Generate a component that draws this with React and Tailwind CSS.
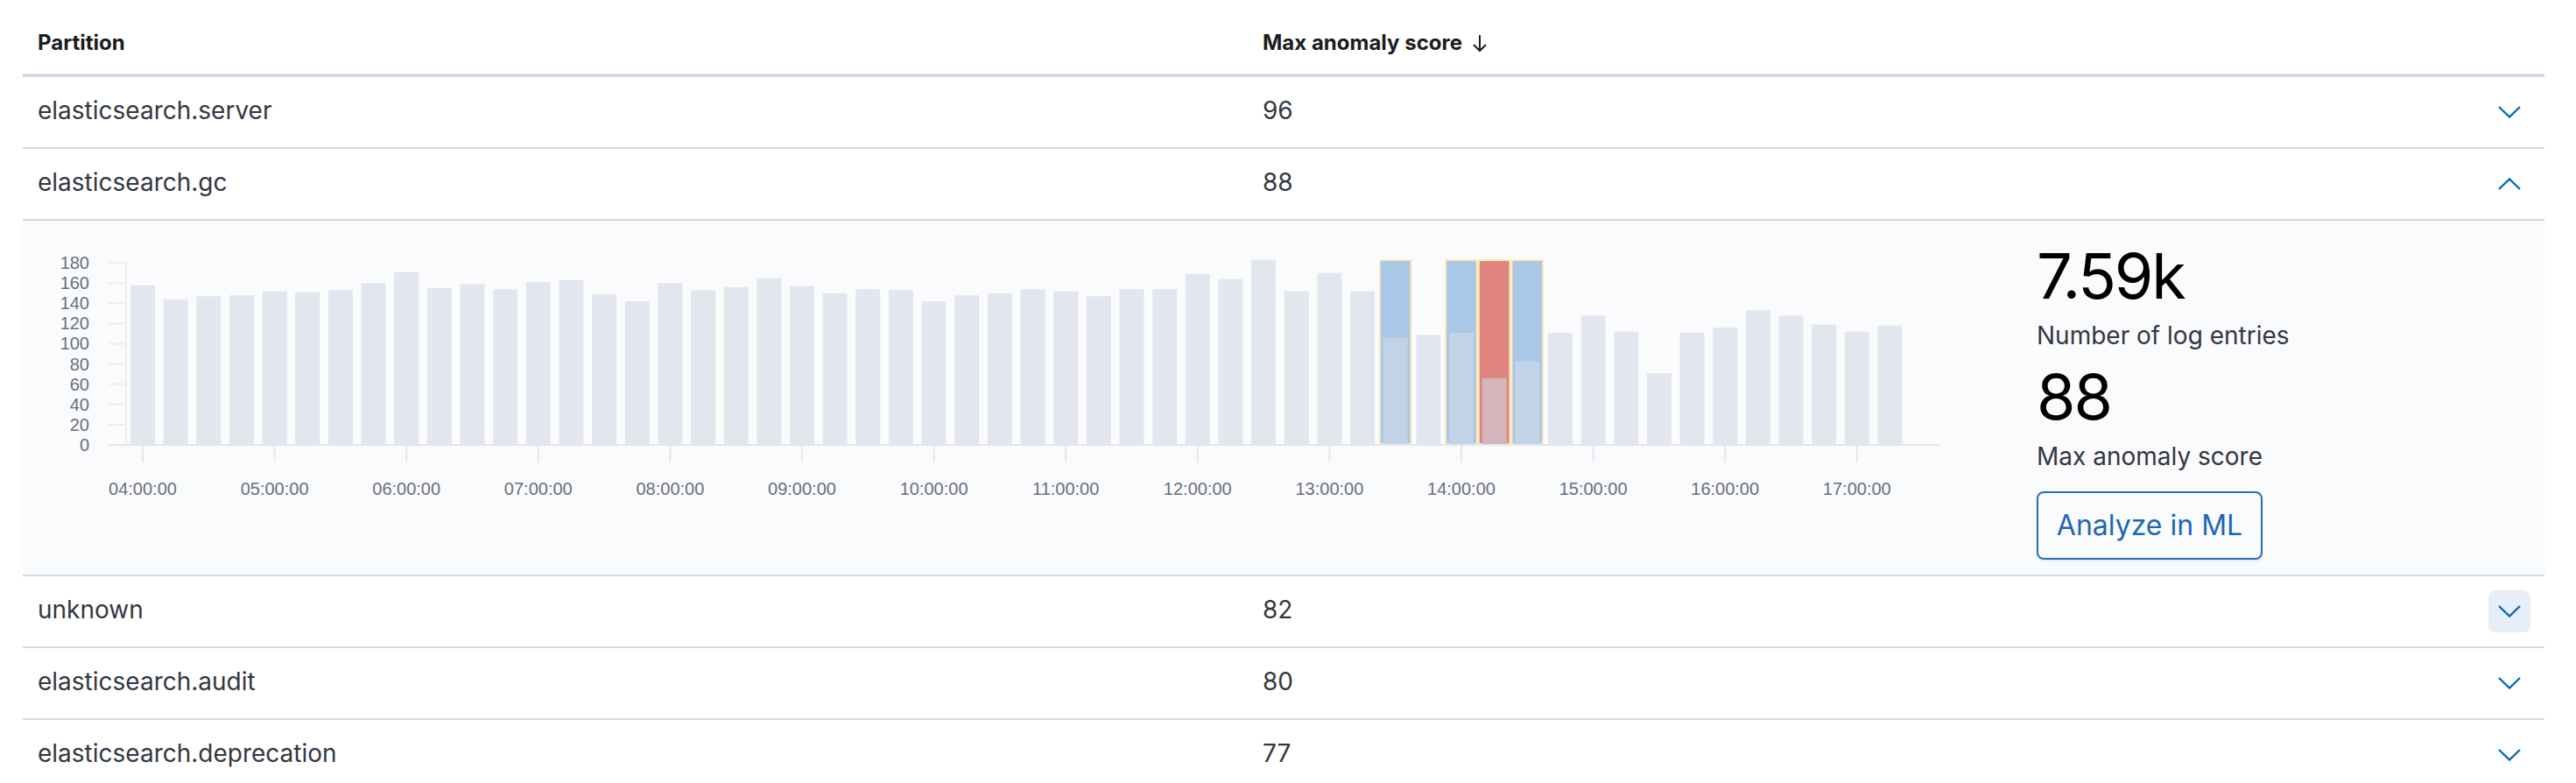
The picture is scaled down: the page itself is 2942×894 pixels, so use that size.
import React from "react";

const values = [157,143,146,147,151,150,152,159,170,154,158,153,160,162,148,141,159,152,155,164,156,149,153,152,141,147,149,153,151,146,153,153,168,163,182,151,169,151,105,108,110,65,82,110,127,111,70,110,115,132,127,118,111,117];
const highlights = { 38: "blue", 40: "blue", 41: "red", 42: "blue" };
const hours = ["04:00:00","05:00:00","06:00:00","07:00:00","08:00:00","09:00:00","10:00:00","11:00:00","12:00:00","13:00:00","14:00:00","15:00:00","16:00:00","17:00:00"];

const BASE = 256;
const K = 208 / 180;
const PITCH = 37.65;
const X0 = 137;

function Chevron({ up }) {
  return (
    <svg width="26" height="14" viewBox="0 0 26 14" className="text-[#006bb8]">
      <path d={up ? "M1 13 L13 1.5 L25 13" : "M1 1 L13 12.5 L25 1"} fill="none" stroke="currentColor" strokeWidth="2.4" />
    </svg>
  );
}

function Chart() {
  const ticks = [0,20,40,60,80,100,120,140,160,180];
  return (
    <svg width="2214" height="404" viewBox="0 0 2214 404" className="block shrink-0">
      {ticks.map((t) => {
        const y = BASE - t * K;
        return (
          <g key={t}>
            <line x1="98" x2="117" y1={y} y2={y} stroke="#eceef2" strokeWidth="2" />
            <text x="76" y={y + 7} textAnchor="end" fontSize="20" fill="#69707d" fontFamily="Liberation Sans, Arial, sans-serif">{t}</text>
          </g>
        );
      })}
      <line x1="118" x2="118" y1="46" y2={BASE} stroke="#eceef2" strokeWidth="2" />
      {values.map((v, i) => {
        const cx = X0 + i * PITCH;
        const h = highlights[i];
        const top = BASE - 1 - v * K;
        return (
          <g key={i}>
            {h && (
              <rect x={cx - PITCH / 2 + 1} y="45" width={PITCH - 2} height={BASE - 45 - 1} fill={h === "red" ? "#e0847f" : "#a9c7e6"} stroke="#fbeab8" strokeWidth="2" />
            )}
            <rect x={cx - 14} y={top} width="28" height={BASE - 1 - top} fill={h === "red" ? "#d6b5bd" : h ? "#c2d2e7" : "#e4e6ef"} />
          </g>
        );
      })}
      <line x1="98" x2="2189" y1={BASE} y2={BASE} stroke="#e3e5e9" strokeWidth="2" />
      {hours.map((lbl, h) => {
        const x = X0 + h * 4 * PITCH;
        return (
          <g key={lbl}>
            <line x1={x} x2={x} y1={BASE + 1} y2={BASE + 20} stroke="#e6e8ec" strokeWidth="2" />
            <text x={x} y="313" textAnchor="middle" fontSize="20" fill="#69707d" fontFamily="Liberation Sans, Arial, sans-serif">{lbl}</text>
          </g>
        );
      })}
    </svg>
  );
}

function Row({ name, score, up, hovered }) {
  return (
    <div className="flex h-[82px] border-b-2 border-[#d3dae6] items-center pb-[4px]">
      <div className="w-[1400px] pl-[17px] text-[28px] leading-[42px] text-[#343741]">{name}</div>
      <div className="w-[1400px] pl-[16px] text-[28px] leading-[42px] text-[#343741]">{score}</div>
      <div className="w-[80px] flex justify-center pt-[4px]">
        <div className={"w-[48px] h-[48px] rounded-[8px] flex items-center justify-center " + (hovered ? "bg-[#e7eef8]" : "")}>
          <Chevron up={up} />
        </div>
      </div>
    </div>
  );
}

export default function App() {
  return (
    <div className="w-[2942px] min-h-[894px] bg-white px-[26px] font-[Inter,sans-serif]">
      <div className="w-[2880px]">
        <div className="flex h-[88px] border-b-4 border-[#d3dae6] pt-[31px]">
          <div className="w-[1400px] pl-[17px] text-[24px] leading-[36px] font-bold text-[#1a1c21]">Partition</div>
          <div className="w-[1400px] pl-[16px] text-[24px] leading-[36px] font-bold text-[#1a1c21] flex items-start">
            <span>Max anomaly score</span>
            <svg width="24" height="24" viewBox="0 0 24 24" className="ml-[8px] mt-[7px]">
              <path d="M12 2 V20 M5 13 L12 20 L19 13" fill="none" stroke="#1a1c21" strokeWidth="2" />
            </svg>
          </div>
          <div className="w-[80px]" />
        </div>
        <Row name="elasticsearch.server" score="96" />
        <Row name="elasticsearch.gc" score="88" up />
        <div className="flex h-[406px] border-b-2 border-[#d3dae6] bg-[#fafbfd]">
          <Chart />
          <div className="pl-[86px] pt-[20px] flex flex-col items-start">
            <div className="text-[72px] leading-[86px] tracking-[-0.03em] text-black">7.59k</div>
            <div className="mt-[4px] text-[28px] leading-[42px] text-[#343741]">Number of log entries</div>
            <div className="mt-[6px] text-[72px] leading-[86px] tracking-[-0.03em] text-black">88</div>
            <div className="mt-[4px] text-[28px] leading-[42px] text-[#343741]">Max anomaly score</div>
            <button className="mt-[19px] w-[258px] h-[78px] border-2 border-[#2a6cb8] rounded-[8px] flex items-center justify-center text-[32px] text-[#1f67b5] shadow-[0_2px_3px_rgba(0,0,0,0.08)]">Analyze in ML</button>
          </div>
        </div>
        <Row name="unknown" score="82" hovered />
        <Row name="elasticsearch.audit" score="80" />
        <Row name="elasticsearch.deprecation" score="77" />
      </div>
    </div>
  );
}
